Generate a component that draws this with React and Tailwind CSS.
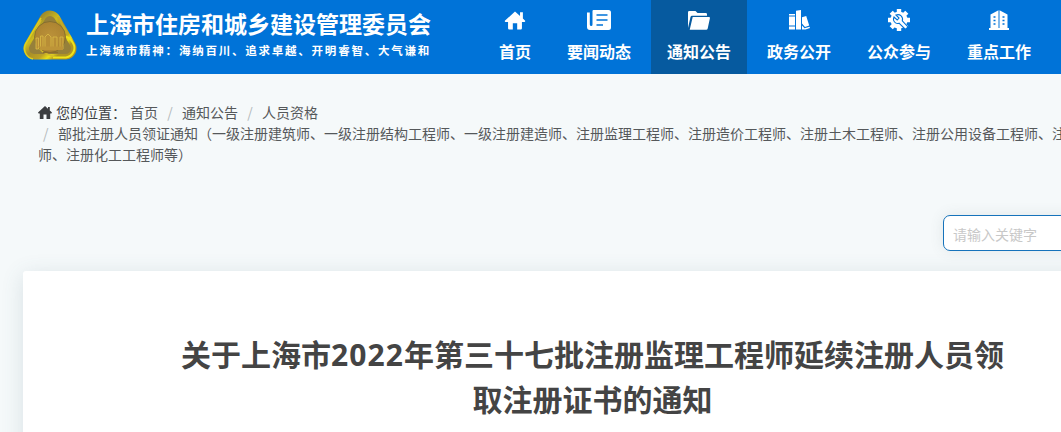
import React from "react";

function Emblem() {
  return (
    <svg className="h-[52px] w-[54px] shrink-0" viewBox="0 0 54 52">
      <defs>
        <linearGradient id="rim" x1="0" y1="0" x2="1" y2="1">
          <stop offset="0" stopColor="#9c8a2c" />
          <stop offset="0.3" stopColor="#cdbb1e" />
          <stop offset="0.5" stopColor="#a88e28" />
          <stop offset="0.75" stopColor="#bda224" />
          <stop offset="0.88" stopColor="#eadf18" />
          <stop offset="1" stopColor="#b09522" />
        </linearGradient>
        <radialGradient id="disc">
          <stop offset="0" stopColor="#bb923a" />
          <stop offset="1" stopColor="#ad8431" />
        </radialGradient>
      </defs>
      <path d="M27 12.500L11.500 39.500H42.500Z" fill="url(#rim)" stroke="url(#rim)" strokeWidth="22" strokeLinejoin="round" />
      <path d="M27 12.500L11.500 39.500H42.500Z" fill="#96803a" stroke="#96803a" strokeWidth="11" strokeLinejoin="round" />
      <path d="M18 9L2.500 35C-0.500 42 4 49 10 50" fill="none" stroke="#dcd01e" strokeWidth="1.500" />
      <path d="M35 8L44 24C38 23 34 25 31 28" fill="none" stroke="#c4aa26" strokeWidth="2.500" />
      <path d="M30 48.500H43C50 47 53.500 40 50 34C47 28 42 26 37 29" fill="none" stroke="#eee31a" strokeWidth="2" />
      <path d="M18 11C13 20 11 26 13 33C16 41 23 46 31 47" fill="none" stroke="#d5bd29" strokeWidth="1.800" />
      <circle cx="27" cy="28" r="15.500" fill="url(#disc)" stroke="#75662d" strokeWidth="0.700" />
      <path d="M13 40V29H15.500V40ZM17.500 40V27H20V40ZM22 40V28L25 25L28 28V40ZM30 40V28H34V40ZM37 40V28H40V40Z" fill="#b88e36" stroke="#dcbc48" strokeWidth="0.800" />
      <path d="M15 37.500H40V41H18Z" fill="#bd9438" />
      <path d="M20 43.500H35" stroke="#8c6c2b" strokeWidth="1.200" />
    </svg>
  );
}

function HomeGlyph({ className }) {
  return (
    <svg className={className} viewBox="0 0 22 20" fill="currentColor">
      <path d="M11 0.500L0.300 10.300Q0 11.500 1.200 11.500H3.700V18.200Q3.700 19.500 5 19.500H8.700V13H13.300V19.500H17Q18.300 19.500 18.300 18.200V11.500H20.800Q22 11.500 21.700 10.300L19.300 8V1.200H16.300V5.200Z" />
    </svg>
  );
}

function NewsGlyph({ className }) {
  return (
    <svg className={className} viewBox="0 0 24 20">
      <path d="M0 2.500H2.800V14.500Q2.800 16 4.300 16Q5.500 16 5.500 14.500V1Q5.500 0 6.500 0H21.500Q24 0 24 2.500V17.500Q24 20 21.500 20H3Q0 20 0 17Z" fill="currentColor" />
      <path d="M9.500 5H20.500M9.500 10H20.500M9.500 15H16" stroke="#0073d8" strokeWidth="1.500" />
    </svg>
  );
}

function FolderGlyph({ className }) {
  return (
    <svg className={className} viewBox="0 0 22 19" fill="currentColor">
      <path d="M0 17V1.300Q0 0 1.300 0H7.500L9.500 2H17.700Q19 2 19 3.300V4.800H4Q2.800 4.800 2.500 6Z" />
      <path d="M4.700 6H21Q22.200 6 21.900 7.200L19.700 17.500Q19.400 18.700 18.200 18.700H1.700Z" />
    </svg>
  );
}

function BooksGlyph({ className }) {
  return (
    <svg className={className} viewBox="0 0 21 20" fill="currentColor">
      <path d="M0 4H6V5.500H0ZM0 6.500H6V15.500H0ZM0 16.500H6V19.500H0ZM7 0.700L12 0V19.500H7Z" />
      <path d="M13 7.200L17.200 6L20.200 15.500L16 17L13 13.500ZM13 15.500L15.500 18.300L20.500 16.700L21 18L16.500 19.500H13Z" />
    </svg>
  );
}

function GearGlyph({ className }) {
  return (
    <svg className={className} viewBox="0 0 22 22">
      <g fill="currentColor">
        <circle cx="11" cy="11" r="8.600" />
        <g stroke="currentColor" strokeWidth="4.400">
          <path d="M11 0V22M0 11H22M3.200 3.200L18.800 18.800M3.200 18.800L18.800 3.200" />
        </g>
      </g>
      <path
        d="M8 6L11 9L9.200 11L6 8C4.300 11.800 7.500 15.500 11 14.200L17.500 20.500L20 18L14.300 11.800C15.500 8 12 4.500 8 6Z"
        fill="white"
        stroke="#0073d8"
        strokeWidth="1.100"
      />
    </svg>
  );
}

function BuildingGlyph({ className }) {
  return (
    <svg className={className} viewBox="0 0 20 20">
      <path d="M1.500 18.500V4.500L9.500 0.300V18.500ZM10.500 0.300L18.500 4.500V18.500H10.500ZM0 18H20V20H0Z" fill="currentColor" />
      <path d="M4.500 7H6.500M4.500 10.500H6.500M4.500 14H6.500M13.500 7H15.500M13.500 10.500H15.500M13.500 14H15.500" stroke="#0073d8" strokeWidth="1.400" />
    </svg>
  );
}

const NAV = [
  { label: "首页", Icon: HomeGlyph, size: "h-[19px] w-[22px]" },
  { label: "要闻动态", Icon: NewsGlyph, size: "h-[20px] w-[24px]" },
  { label: "通知公告", Icon: FolderGlyph, size: "h-[19px] w-[22px]", active: true },
  { label: "政务公开", Icon: BooksGlyph, size: "h-[20px] w-[21px]" },
  { label: "公众参与", Icon: GearGlyph, size: "h-[22px] w-[22px]" },
  { label: "重点工作", Icon: BuildingGlyph, size: "h-[20px] w-[20px]" },
];

function Header() {
  return (
    <header className="flex h-[74px] shrink-0 bg-[#0073d8] text-white">
      <div className="flex w-[483px] shrink-0 pt-[9px] pl-[23px]">
        <Emblem />
        <div className="ml-[9px] whitespace-nowrap">
          <div className="-mt-px text-[23px] leading-[30px] font-bold">上海市住房和城乡建设管理委员会</div>
          <div className="mt-[3px] text-[11.5px] leading-[18px] font-bold tracking-[1.77px]">
            上海城市精神：海纳百川、追求卓越、开明睿智、大气谦和
          </div>
        </div>
      </div>
      <nav className="flex shrink-0 gap-1">
        {NAV.map(({ label, Icon, size, active }) => (
          <a
            key={label}
            className={`flex flex-col items-center px-4 pt-2 ${active ? "bg-[#065a9f]" : ""}`}
          >
            <span className="flex h-6 items-center">
              <Icon className={size} />
            </span>
            <span className="mt-[7px] text-base leading-6 font-bold whitespace-nowrap">{label}</span>
          </a>
        ))}
      </nav>
    </header>
  );
}

function Slash() {
  return <span className="w-6 text-center text-[#b4b9bc]">/</span>;
}

function Breadcrumb() {
  return (
    <div className="shrink-0 pt-[28px] pl-[38px] text-sm leading-[21px] whitespace-nowrap text-[#55585a]">
      <div className="flex items-center">
        <svg className="mr-1 h-[13px] w-[14px] text-[#3b3e40]" viewBox="0 0 14 13" fill="currentColor">
          <path d="M7 0L0 6.500L0.600 7.600H1.800V13H5.500V8.500H8.500V13H12.200V7.600H13.400L14 6.500L11.800 4.500V1H10V2.800Z" />
        </svg>
        <span className="mr-1 text-[#3d4042]">您的位置：</span>
        <span>首页</span>
        <Slash />
        <span>通知公告</span>
        <Slash />
        <span>人员资格</span>
      </div>
      <div className="flex">
        <span className="w-5 shrink-0 pl-[5px] text-[#b4b9bc]">/</span>
        <span className="shrink-0">
          部批注册人员领证通知（一级注册建筑师、一级注册结构工程师、一级注册建造师、注册监理工程师、注册造价工程师、注册土木工程师、注册公用设备工程师、注
        </span>
      </div>
      <div>师、注册化工工程师等）</div>
    </div>
  );
}

export default function App() {
  return (
    <div
      lang="zh-CN"
      className="flex h-[432px] w-[1061px] flex-col overflow-hidden bg-[#f5f9fa] font-['Noto_Sans_CJK_SC',sans-serif]"
    >
      <Header />
      <Breadcrumb />
      <div className="mt-[50px] ml-[943px] flex h-9 w-[240px] shrink-0 items-center rounded-[7px] border border-[#1673bb] bg-white pt-px pl-[9px] text-sm text-[#c8c8c8] shadow-[0_0_14px_rgba(80,100,110,0.12)]">
        请输入关键字
      </div>
      <main className="mt-5 ml-[23px] h-[300px] w-[1140px] shrink-0 rounded-t-[3px] bg-white pt-[60px] shadow-[0_4px_22px_rgba(70,100,120,0.16)]">
        <h1 className="ml-[156px] w-[827px] text-center text-[30px] leading-[45px] font-bold whitespace-nowrap text-[#444]">
          关于上海市
          <span className="font-['Open_Sans',sans-serif] leading-none tracking-[1.1px]">2022</span>
          年第三十七批注册监理工程师延续注册人员领
          <br />
          取注册证书的通知
        </h1>
      </main>
    </div>
  );
}
